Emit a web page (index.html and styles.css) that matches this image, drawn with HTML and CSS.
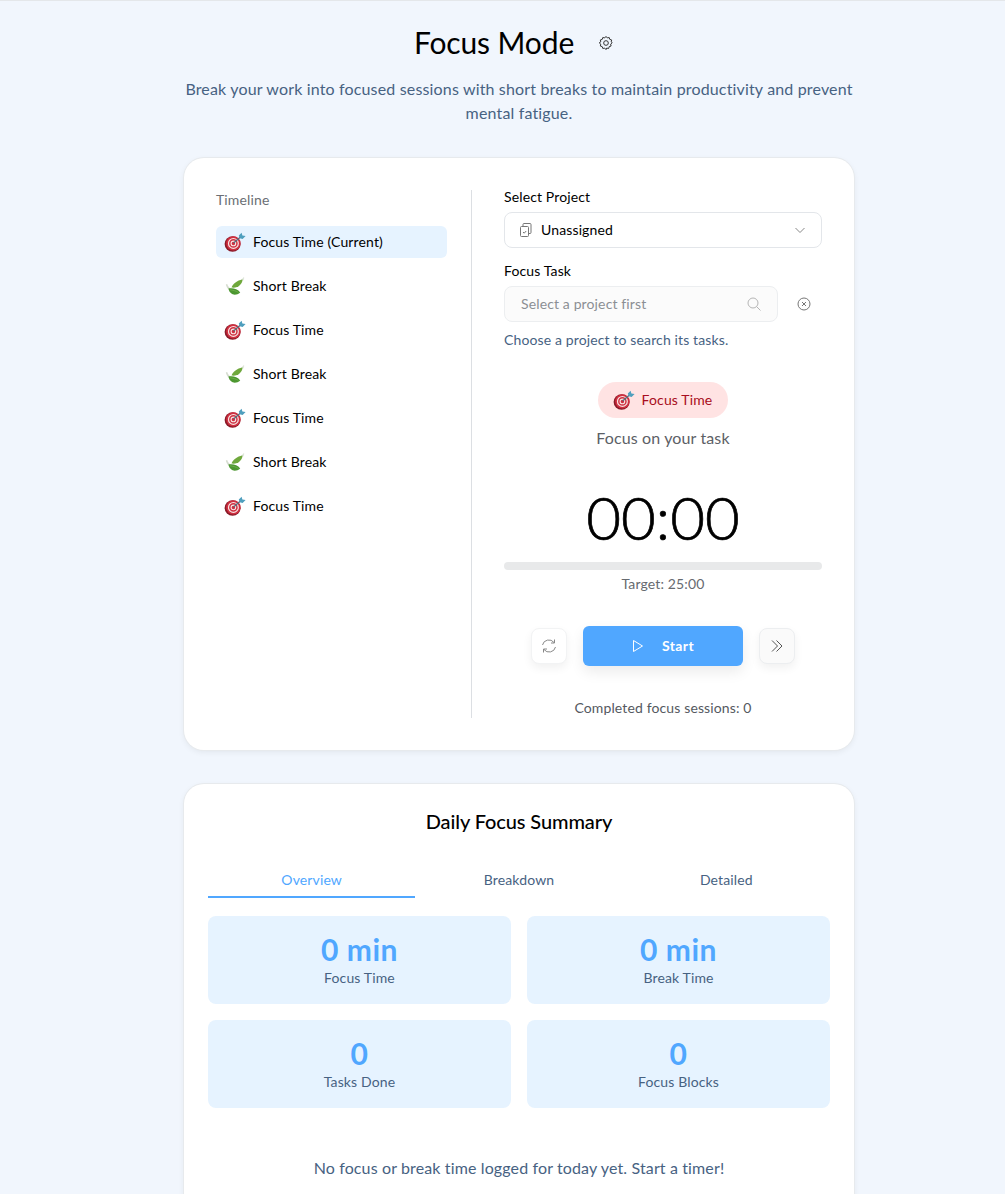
FILE: index.html
```html
<!DOCTYPE html>
<html>
	<head>
		<meta charset="utf-8">
		<title>Focus Mode</title>
		<link rel="stylesheet" href="styles.css">
	</head>
	<body>
		<!-- shared emoji drawings -->
		<svg class="defs" width="0" height="0">
			<symbol id="dart" viewBox="0 0 22 20">
				<ellipse cx="8.6" cy="12" rx="8" ry="7.8" fill="#8a1a28"/>
				<circle cx="9.4" cy="11.4" r="7.2" fill="#cf2f40"/>
				<circle cx="9.4" cy="11.4" r="4.9" fill="none" stroke="#f7e6e4" stroke-width="1.2"/>
				<circle cx="9.4" cy="11.4" r="2.3" fill="none" stroke="#f7e6e4" stroke-width="1.1"/>
				<path d="M9.6 11L17 4.5" stroke="#55707f" stroke-width="1.3"/>
				<path d="M14.8 3.6L17.6 .8L18.4 3.4L21.6 4L18.6 7L15.8 6.2z" fill="#4f9fbe"/>
			</symbol>
			<symbol id="leaf" viewBox="0 0 20 20">
				<path d="M15 4.5C16.5 3.5 18 2 19 .8C19.4 2 19.2 3.2 18.4 4.4" fill="#dfe6da"/>
				<path d="M6.5 11.5C8 7.5 12 4.5 17.5 3.5C17.5 8 13 12.5 6.5 11.5z" fill="#6fa83c"/>
				<path d="M.8 8.5C1.5 11 2.5 13 5 14.6L6.6 13.4C4.4 12 3 10.4 2.2 8z" fill="#d5dccf"/>
				<path d="M3.4 12.6C7.5 11.6 12.6 13 15.2 16.4C11 20 5 19.6 3.4 12.6z" fill="#4c9730"/>
				<path d="M5 13.8C8 14.2 11 15 13.4 16.4" stroke="#7dbb55" stroke-width=".6" fill="none"/>
			</symbol>
		</svg>

		<div class="page">
			<div class="title-row">
				<h1>Focus Mode</h1>
				<button class="gear-btn">
					<svg width="14" height="14" viewBox="0 0 24 24" fill="none" stroke="#333" stroke-width="1.7">
						<path d="M12 2l2.2 2.6 3.3-.7 1 3.2 3.2 1-.7 3.3L22.6 13l-2.6 2.2.7 3.3-3.2 1-1 3.2-3.3-.7L12 24.6" transform="translate(0 -1.3)"/>
						<path d="M12 2L9.8 4.6l-3.3-.7-1 3.2-3.2 1 .7 3.3L.4 13 3 15.2l-.7 3.3 3.2 1 1 3.2 3.3-.7L12 24.6" transform="translate(0 -1.3)"/>
						<circle cx="12" cy="12" r="4"/>
					</svg>
				</button>
			</div>
			<p class="intro">Break your work into focused sessions with short breaks to maintain productivity and prevent mental fatigue.</p>

			<div class="card timer-card">
				<div class="timeline">
					<div class="timeline-label">Timeline</div>
					<div class="step step-current"><svg class="emoji"><use href="#dart"/></svg>Focus Time (Current)</div>
					<div class="step"><svg class="emoji"><use href="#leaf"/></svg>Short Break</div>
					<div class="step"><svg class="emoji"><use href="#dart"/></svg>Focus Time</div>
					<div class="step"><svg class="emoji"><use href="#leaf"/></svg>Short Break</div>
					<div class="step"><svg class="emoji"><use href="#dart"/></svg>Focus Time</div>
					<div class="step"><svg class="emoji"><use href="#leaf"/></svg>Short Break</div>
					<div class="step"><svg class="emoji"><use href="#dart"/></svg>Focus Time</div>
				</div>

				<div class="timer-side">
					<div class="field-label">Select Project</div>
					<div class="select">
						<svg width="14" height="14" viewBox="0 0 14 14" fill="none" stroke="#777" stroke-width="1">
							<rect x="1.5" y="3.5" width="8" height="10" rx="1"/>
							<path d="M4 3.5V1.5a1 1 0 0 1 1-1h6a1 1 0 0 1 1 1v8a1 1 0 0 1-1 1H9.5"/>
							<path d="M4 9l1.2 1.2L7.2 8"/>
						</svg>
						<span class="select-text">Unassigned</span>
						<svg width="12" height="12" viewBox="0 0 12 12" fill="none" stroke="#888" stroke-width="1">
							<path d="M1.5 4l4.5 4.5L10.5 4"/>
						</svg>
					</div>

					<div class="field-label">Focus Task</div>
					<div class="task-row">
						<div class="search">
							<span class="search-text">Select a project first</span>
							<svg width="14" height="14" viewBox="0 0 14 14" fill="none" stroke="#b5b5b5" stroke-width="1">
								<circle cx="6" cy="6" r="5"/>
								<path d="M9.6 9.6L13.5 13.5"/>
							</svg>
						</div>
						<svg class="clear" width="14" height="14" viewBox="0 0 14 14" fill="none" stroke="#777" stroke-width="1">
							<circle cx="7" cy="7" r="6"/>
							<path d="M5 5l4 4M9 5l-4 4"/>
						</svg>
					</div>
					<div class="hint">Choose a project to search its tasks.</div>

					<div class="mode-wrap">
						<div class="mode-pill"><svg class="emoji"><use href="#dart"/></svg>Focus Time</div>
					</div>
					<div class="mode-sub">Focus on your task</div>
					<div class="clock">00:00</div>
					<div class="progress"></div>
					<div class="target">Target: 25:00</div>

					<div class="controls">
						<button class="icon-btn icon-btn-light">
							<svg width="16" height="16" viewBox="0 0 16 16" fill="none" stroke="#888" stroke-width="1">
								<path d="M1.5 7A6.5 6.5 0 0 1 13 4.5"/>
								<path d="M13.5 1.5v3.5H10"/>
								<path d="M14.5 9A6.5 6.5 0 0 1 3 11.5"/>
								<path d="M2.5 14.5V11H6"/>
							</svg>
						</button>
						<button class="start-btn">
							<svg width="12" height="14" viewBox="0 0 12 14" fill="none" stroke="#fff" stroke-width="1">
								<path d="M1.5 1.5L10.5 7L1.5 12.5z"/>
							</svg>
							<span class="start-text">Start</span>
						</button>
						<button class="icon-btn">
							<svg width="14" height="14" viewBox="0 0 14 14" fill="none" stroke="#555" stroke-width="1">
								<path d="M2 1.5L7.5 7L2 12.5"/>
								<path d="M6.5 1.5L12 7L6.5 12.5"/>
							</svg>
						</button>
					</div>
					<div class="completed">Completed focus sessions: 0</div>
				</div>
			</div>

			<div class="card summary-card">
				<h2>Daily Focus Summary</h2>
				<div class="tabs">
					<div class="tab tab-active">Overview</div>
					<div class="tab">Breakdown</div>
					<div class="tab">Detailed</div>
				</div>
				<div class="stats">
					<div class="stat"><div class="stat-num">0 min</div><div class="stat-label">Focus Time</div></div>
					<div class="stat"><div class="stat-num">0 min</div><div class="stat-label">Break Time</div></div>
					<div class="stat"><div class="stat-num">0</div><div class="stat-label">Tasks Done</div></div>
					<div class="stat"><div class="stat-num">0</div><div class="stat-label">Focus Blocks</div></div>
				</div>
				<p class="empty">No focus or break time logged for today yet. Start a timer!</p>
			</div>
		</div>
	</body>
</html>
```

FILE: styles.css
```css
* {
	padding: 0;
	margin: 0;
	box-sizing: border-box;
}
html, body {
	height: 1194px;
	overflow: hidden;
}
body {
	background-color: #f1f6fd;
	border-top: 1px solid #e4e7ea;
	font-family: "Lato", "Noto Sans", sans-serif;
	letter-spacing: 0.13px;
	color: #000;
}
.defs {
	display: block;
	height: 0;
}
.page {
	width: 670px;
	margin-left: 184px;
}
.title-row {
	display: flex;
	justify-content: center;
	align-items: center;
	gap: 25px;
	height: 42px;
	margin-top: 21px;
}
h1 {
	font-size: 30px;
	font-weight: 400;
	line-height: 40px;
	padding-bottom: 2px;
	letter-spacing: -0.12px;
}
.gear-btn {
	border: 0;
	background: none;
	display: flex;
	padding: 0 11px 0 0;
}
.intro {
	margin-top: 13px;
	font-size: 16px;
	line-height: 24px;
	letter-spacing: 0.16px;
	color: #476282;
	text-align: center;
}
.card {
	background-color: #fff;
	border-radius: 20px;
	box-shadow: 0 0 0 1px #e7eaed, 0 2px 6px rgba(0, 0, 0, 0.07);
}
.timer-card {
	display: flex;
	height: 592px;
	margin-top: 33px;
	padding: 32px;
}
.timeline {
	width: 256px;
	padding-right: 24px;
	border-right: 1px solid #dcdfe3;
}
.timeline-label {
	font-size: 14px;
	line-height: 20px;
	color: #6b6f75;
	margin-bottom: 16px;
}
.step {
	display: flex;
	align-items: center;
	height: 32px;
	margin-bottom: 12px;
	padding-left: 8px;
	padding-bottom: 2px;
	border-radius: 6px;
	font-size: 14px;
}
.step-current {
	background-color: #e6f3ff;
}
.emoji {
	width: 22px;
	height: 20px;
	margin-top: 2px;
	margin-right: 7px;
	flex-shrink: 0;
}
.timer-side {
	width: 318px;
	margin-left: 32px;
}
.field-label {
	font-size: 14px;
	line-height: 20px;
	margin-top: -3px;
	margin-bottom: 5px;
}
.select {
	display: flex;
	align-items: center;
	height: 36px;
	padding: 0 15px 0 14px;
	border: 1px solid #e3e6ea;
	border-radius: 8px;
	margin-bottom: 16px;
	font-size: 14px;
}
.select-text {
	flex: 1;
	margin-left: 8px;
	padding-bottom: 2px;
}
.task-row {
	display: flex;
	align-items: center;
	margin-bottom: 8px;
}
.search {
	display: flex;
	align-items: center;
	justify-content: space-between;
	width: 274px;
	height: 36px;
	padding: 0 16px;
	border: 1px solid #eceef0;
	border-radius: 8px;
	background-color: #fbfbfb;
	font-size: 14px;
	color: #8b8f94;
}
.search-text {
	padding-bottom: 2px;
}
.clear {
	margin-left: 19px;
}
.hint {
	font-size: 14px;
	line-height: 20px;
	color: #476282;
}
.mode-wrap {
	display: flex;
	justify-content: center;
	margin-top: 32px;
}
.mode-pill {
	display: flex;
	align-items: center;
	height: 36px;
	padding: 0 16px 2px 15px;
	border-radius: 18px;
	background-color: #ffe3e3;
	color: #a80d20;
	font-size: 14px;
}
.mode-sub {
	margin-top: 8px;
	font-size: 16px;
	line-height: 24px;
	color: #5c6066;
	text-align: center;
}
.clock {
	margin-top: 31px;
	font-size: 60px;
	line-height: 72px;
	font-weight: 300;
	-webkit-text-stroke: 0.7px #000;
	letter-spacing: 0;
	text-align: center;
}
.progress {
	height: 8px;
	margin-top: 9px;
	border-radius: 4px;
	background-color: #e8e9ea;
}
.target {
	margin-top: 4px;
	font-size: 14px;
	line-height: 20px;
	color: #666a70;
	text-align: center;
}
.controls {
	display: flex;
	justify-content: center;
	align-items: center;
	gap: 16px;
	margin-top: 32px;
}
.icon-btn {
	display: flex;
	align-items: center;
	justify-content: center;
	width: 36px;
	height: 36px;
	border: 1px solid #eceef0;
	border-radius: 8px;
	background-color: #fafafa;
	box-shadow: 0 4px 10px rgba(0, 0, 0, 0.06);
}
.icon-btn-light {
	background-color: #fff;
	border-color: #f2f3f4;
}
.start-btn {
	display: flex;
	align-items: center;
	justify-content: center;
	gap: 18px;
	width: 160px;
	height: 40px;
	border: 0;
	border-radius: 6px;
	background-color: #50a7ff;
	color: #fff;
	font-family: inherit;
	font-size: 14px;
	font-weight: 700;
	letter-spacing: 0.4px;
	box-shadow: 0 6px 14px rgba(0, 0, 0, 0.08);
}
.start-text {
	padding-bottom: 2px;
}
.completed {
	margin-top: 32px;
	font-size: 14px;
	line-height: 20px;
	color: #55595f;
	text-align: center;
}
.summary-card {
	margin-top: 34px;
	padding: 24px;
	height: 500px;
}
h2 {
	margin-top: -2px;
	font-size: 20px;
	font-weight: 500;
	line-height: 30px;
	letter-spacing: -0.1px;
	text-align: center;
}
.tabs {
	display: flex;
	margin-top: 28px;
}
.tab {
	flex: 1;
	height: 34px;
	line-height: 32px;
	text-align: center;
	font-size: 14px;
	color: #476282;
}
.tab-active {
	color: #50a7ff;
	border-bottom: 2px solid #50a7ff;
}
.stats {
	display: grid;
	grid-template-columns: 1fr 1fr;
	gap: 16px;
	margin-top: 18px;
}
.stat {
	height: 88px;
	padding-top: 15px;
	border-radius: 8px;
	background-color: #e6f3ff;
	text-align: center;
}
.stat-num {
	font-size: 30px;
	line-height: 36px;
	font-weight: 700;
	letter-spacing: 0.5px;
	color: #50a7ff;
	margin-bottom: 1px;
}
.stat-label {
	font-size: 14px;
	line-height: 20px;
	color: #476282;
}
.empty {
	margin-top: 48px;
	font-size: 16px;
	line-height: 24px;
	color: #476282;
	text-align: center;
}
```
